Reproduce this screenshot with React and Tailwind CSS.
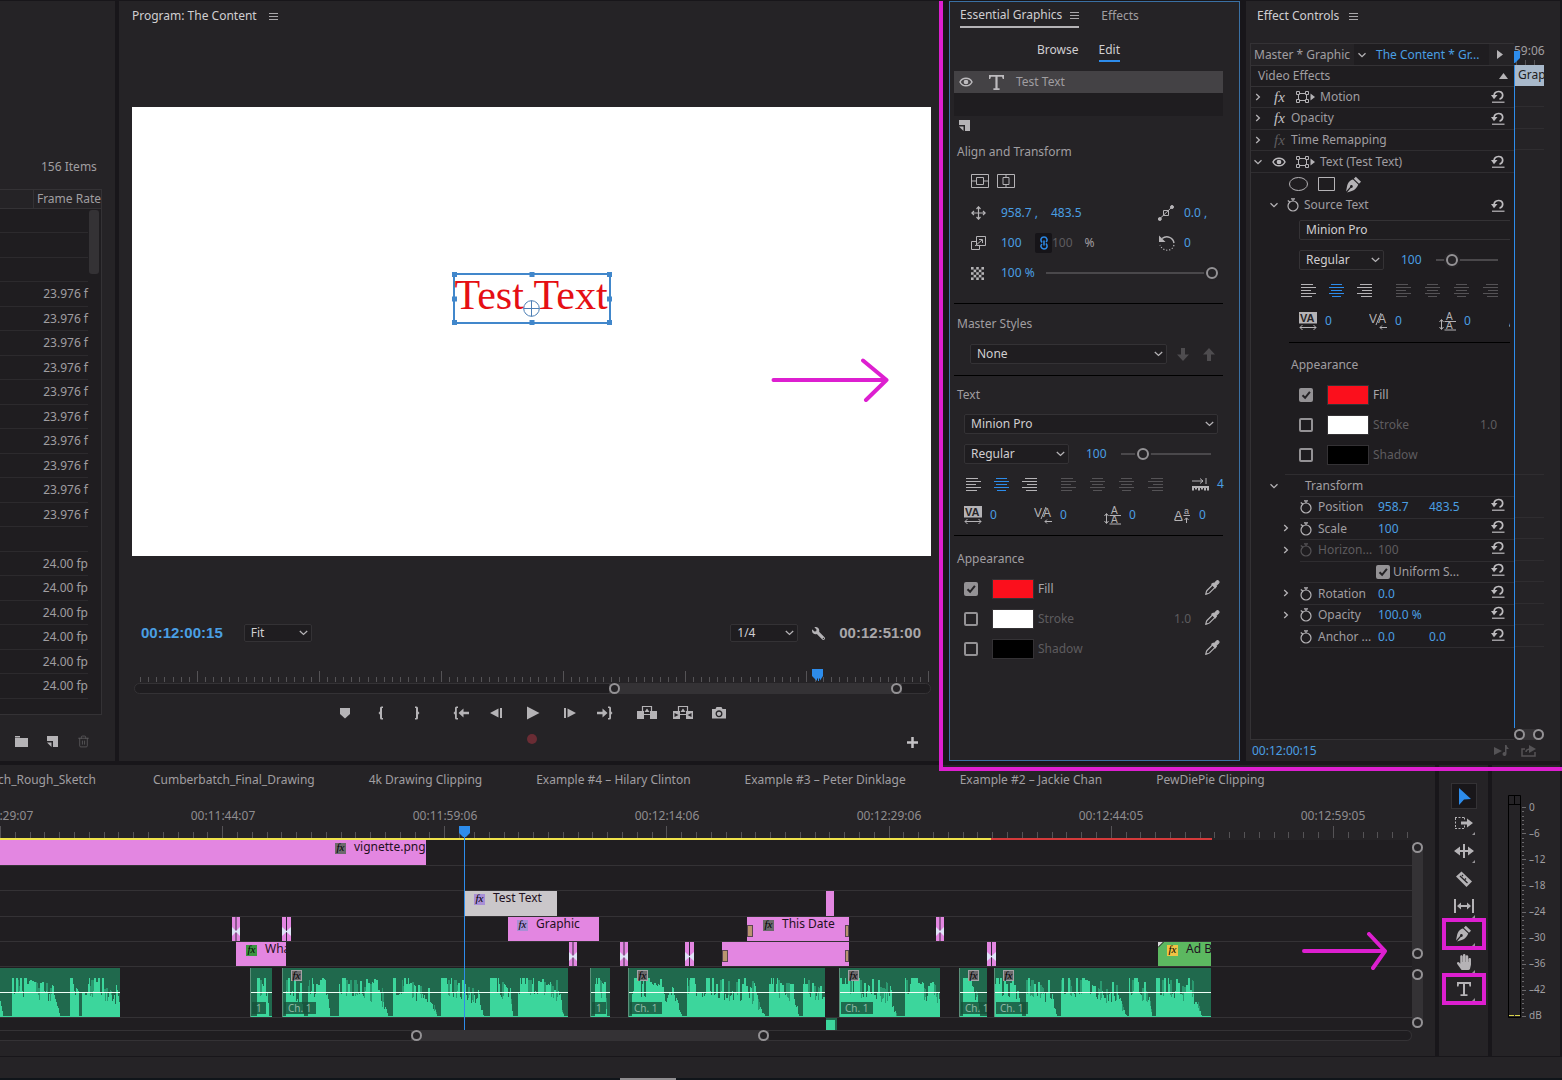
import React from 'react'
import { Trash2 } from 'lucide-react'
import { FaWrench, FaHandPaper } from 'react-icons/fa'

const frameRates = [
  '', '', '',
  ...Array(10).fill('23.976 f'),
  '',
  ...Array(6).fill('24.00 fp'),
]

const sequences = [
  'Cumberbatch_Final_Drawing',
  '4k Drawing Clipping',
  'Example #4 – Hilary Clinton',
  'Example #3 – Peter Dinklage',
  'Example #2 – Jackie Chan',
  'PewDiePie Clipping',
]

const timecodes = ['00:11:29:07', '00:11:44:07', '00:11:59:06', '00:12:14:06', '00:12:29:06', '00:12:44:05', '00:12:59:05']

const videoTracks = [
  { h: 26, clips: [{ x: 0, w: 426, label: 'vignette.png', pad: 335, fx: 'gray' }] },
  { h: 25, clips: [] },
  { h: 26, clips: [{ x: 465, w: 92, label: 'Test Text', pad: 9, fx: 'violet', tone: 'selected' }, { x: 826, w: 8 }] },
  {
    h: 25,
    clips: [
      { x: 232, w: 8, cross: true },
      { x: 282, w: 9, cross: true },
      { x: 508, w: 91, label: 'Graphic', pad: 9, fx: 'violet' },
      { x: 747, w: 102, label: 'This Date', pad: 16, fx: 'gray', handles: true },
      { x: 936, w: 8, cross: true },
    ],
  },
  {
    h: 25,
    clips: [
      { x: 236, w: 50, label: 'Wha', pad: 10, fx: 'green' },
      { x: 569, w: 8, cross: true },
      { x: 620, w: 8, cross: true },
      { x: 685, w: 9, cross: true },
      { x: 722, w: 127, handles: true },
      { x: 987, w: 9, cross: true },
      { x: 1158, w: 53, label: 'Ad B', pad: 9, fx: 'yellow', tone: 'green' },
    ],
  },
]

// phrases are [start, end] pairs, measured from the left edge of the clip
const audioClips = [
  { x: 0, w: 120, phrases: [[-20, 3], [12, 60], [70, 79], [82, 122]] },
  { x: 250, w: 22, label: '1', phrases: [[7, 19]] },
  { x: 282, w: 286, label: 'Ch. 1', fx: true, phrases: [[4, 22], [26, 48], [57, 106], [111, 155], [159, 202], [208, 231], [236, 282]] },
  { x: 590, w: 20, label: '1', phrases: [[5, 17]] },
  { x: 628, w: 197, label: 'Ch. 1', fx: true, phrases: [[4, 54], [59, 137], [141, 171], [175, 200]] },
  { x: 839, w: 101, label: 'Ch. 1', fx: true, phrases: [[1, 58], [66, 103]] },
  { x: 959, w: 28, label: 'Ch. 1', fx: true, phrases: [[4, 21]] },
  { x: 994, w: 217, label: 'Ch. 1', fx: true, phrases: [[1, 28], [32, 63], [67, 133], [135, 158], [162, 208]] },
]

const noise = (n) => {
  let v = Math.imul(n ^ 0x9e3779b9, 0x85ebca6b)
  v = Math.imul(v ^ (v >>> 13), 0xc2b2ae35)
  return ((v ^ (v >>> 16)) >>> 0) / 4294967296
}

function wavePaths(clip) {
  let body = ''
  let spikes = ''
  for (let i = 0; i < clip.w; i++) {
    let low = 1
    let high = 1
    clip.phrases.forEach(([s, e]) => {
      if (i < s || i >= e) return
      const t = (i - s) / (e - s)
      const n = clip.x + i
      const top = t < 0.35 ? 39 - (noise(n) > 0.8 ? 6 : 0) : 39 - noise(n >> 1) * 16 * t
      const base = 26 - noise(n + 900) * 12 * (0.3 + t)
      const fade = t > 0.85 ? (1 - t) / 0.15 : 1
      const loud = noise((n >> 1) + 300) > 0.35 + t * 0.35
      low = Math.max(1, (loud ? top : base) * fade)
      high = Math.max(low, (noise((n >> 1) + 500) > 0.6 ? top - 2 : base) * fade)
    })
    body += `M${i} 49v${-Math.round(low)}h1v${Math.round(low)}z`
    spikes += `M${i} 49v${-Math.round(high)}h1v${Math.round(high)}z`
  }
  return { body, spikes }
}

/* ---------- small shared pieces ---------- */

const Menu = () => (
  <button aria-label="Panel menu" className="text-[#a9a7aa]">
    <svg width="9" height="9" viewBox="0 0 9 9" stroke="currentColor"><path d="M0 1.500h9M0 4.500h9M0 7.500h9" /></svg>
  </button>
)

const Chevron = ({ open, className = '' }) => (
  <svg width="8" height="8" viewBox="0 0 8 8" fill="none" stroke="#b5b3b6" strokeWidth="1.3" className={className}>
    {open ? <path d="M.5 2.200 4 5.600 7.500 2.200" /> : <path d="M2.200 1 5.400 4 2.200 7" />}
  </svg>
)

const Hot = ({ children }) => <button className="text-left text-[#4a9fe3] whitespace-pre">{children}</button>

function Select({ label, value, className }) {
  return (
    <div className={`relative shrink-0 ${className}`}>
      <select aria-label={label} className="block w-full h-full appearance-none rounded-[2px] border border-[#343235] bg-[#1f1d20] px-1.5 leading-4 text-[#d0ced1]">
        <option>{value}</option>
      </select>
      <svg width="9" height="6" viewBox="0 0 9 6" fill="none" stroke="#b5b3b6" strokeWidth="1.3" className="pointer-events-none absolute right-1 top-1/2 -translate-y-1/2"><path d="M.8 1 4.500 4.400 8.200 1" /></svg>
    </div>
  )
}

const Slider = ({ label, value, className }) => (
  <input
    type="range"
    aria-label={label}
    defaultValue={value}
    className={`h-3 shrink-0 appearance-none bg-transparent [&::-webkit-slider-runnable-track]:h-0.5 [&::-webkit-slider-runnable-track]:bg-[#4a484b] [&::-webkit-slider-thumb]:-mt-[5px] [&::-webkit-slider-thumb]:size-3 [&::-webkit-slider-thumb]:appearance-none [&::-webkit-slider-thumb]:rounded-full [&::-webkit-slider-thumb]:border-2 [&::-webkit-slider-thumb]:border-[#949295] [&::-webkit-slider-thumb]:bg-[#252326] [&::-webkit-slider-thumb]:shadow-[0_0_0_2px_#252326] ${className}`}
  />
)

const Check = ({ id, on }) => (
  <span className="relative size-[14px] shrink-0">
    <input id={id} type="checkbox" defaultChecked={on} className="peer block size-[14px] appearance-none rounded-[2px] border-2 border-[#949295] checked:bg-[#949295]" />
    <svg viewBox="0 0 14 14" fill="none" stroke="#252326" strokeWidth="2" className="pointer-events-none absolute inset-0 hidden peer-checked:block"><path d="m3.500 7.200 2.600 2.600 4.800-6" /></svg>
  </span>
)

const Knob = () => <span className="block size-[11px] rounded-full border-2 border-[#949295] bg-[#252326]" />

const NewItem = () => (
  <svg width="11" height="11" viewBox="0 0 11 11" fill="#b5b3b6"><path d="M0 0h11v11H6V5H0z" /><path d="M0 6.500h4.500V11z" /></svg>
)

const Eye = () => (
  <svg width="14" height="10" viewBox="0 0 14 10" fill="none" stroke="#bdbbbe" strokeWidth="1.500"><path d="M1 5c2.500-5 9.500-5 12 0-2.500 5-9.500 5-12 0z" /><circle cx="7" cy="5" r="1.600" fill="#bdbbbe" /></svg>
)

const Reset = () => (
  <button aria-label="Reset parameter">
    <svg width="14" height="13" viewBox="0 0 14 13" fill="none" stroke="#bdbbbe" strokeWidth="1.700"><path d="M3 5.500C3.500.5 11.500 0 11.700 5c0 2-1.200 3.700-3.200 4.200" /><path d="M0 5h6.500L3 9.200z" fill="#bdbbbe" stroke="none" /><path d="M1 12.200h12.500" strokeWidth="1.200" /></svg>
  </button>
)

const Stopwatch = ({ dim }) => (
  <button aria-label="Toggle animation" className="block">
    <svg width="12" height="14" viewBox="0 0 12 14" fill="none" stroke={dim ? '#555356' : '#b5b3b6'} strokeWidth="1.200"><circle cx="6" cy="8" r="5" /><path d="M4 .8h4M6 1v2M.8 2.500l2 1.500" /></svg>
  </button>
)

const TransformBox = () => (
  <svg width="20" height="12" viewBox="0 0 20 12" fill="none" stroke="#b5b3b6"><path d="M3 2.500h6M3 9.500h6M2.500 3v6M10.500 3v6" /><path d="M.5.500h3v3h-3zM9.500.5h3v3h-3zM.5 8.500h3v3h-3zM9.500 8.500h3v3h-3z" fill="#1f1d20" /><path d="m14.500 2.500 4.500 3.500-4.500 3.500z" fill="#b5b3b6" stroke="none" /></svg>
)

const Pen = ({ size = 17 }) => (
  <svg width={size} height={size} viewBox="0 0 17 17" fill="#b5b3b6"><path d="m10.800.8 5.200 5-2 2-5.200-5z" /><path d="m8 3.600 5.200 5c-.8 2.800-3.400 5.800-7.200 6.600L2 16.400l4-4.600a1.400 1.400 0 1 0-.9-.8L1 15.400 2 10.500C2.600 7 5.200 4.200 8 3.600z" /></svg>
)

const Dropper = () => (
  <svg width="15" height="15" viewBox="0 0 15 15" fill="none" stroke="#b5b3b6" strokeWidth="1.200"><path d="M8 4.500 2 10.500c-.8.900-.7 2-1.200 3.600 1.600-.4 2.800-.4 3.700-1.200l6-6" /><path d="m6.800 4.200 1.500-1 .9.500 2.300-2.600c1.400-1.200 3.300.6 2 2l-2.500 2.400.4.800-1.200 1.600z" fill="#b5b3b6" /></svg>
)

const alignShapes = {
  left: 'M0 .5h12M0 3.500h15M0 6.500h10M0 9.500h15M0 12.500h11',
  center: 'M2 .5h11M0 3.500h15M2 6.500h11M0 9.500h15M3 12.500h9',
  right: 'M3 .5h12M0 3.500h15M5 6.500h10M0 9.500h15M4 12.500h11',
}

const Align = ({ shape, color, label }) => (
  <button aria-label={label}>
    <svg width="15" height="13" viewBox="0 0 15 13" stroke={color}><path d={alignShapes[shape]} /></svg>
  </button>
)

const Letters = (props) => <text fill="#b5b3b6" fontFamily="Liberation Sans" fontSize="11" {...props} />

const spacingIcons = [
  <svg width="18" height="18" viewBox="0 0 18 18"><path d="M0 0h18v11.500H0z" fill="#b5b3b6" /><Letters x="1" y="10" fontWeight="bold" fill="#252326">VA</Letters><path d="M1 15.500h16M3.500 13 1 15.500 3.500 18M14.500 13l2.500 2.500-2.500 2.500" stroke="#b5b3b6" fill="none" /></svg>,
  <svg width="18" height="18" viewBox="0 0 18 18"><Letters x="0" y="11" fontSize="12">V</Letters><Letters x="9" y="11" fontSize="12">A</Letters><path d="M7 13 12 1M18 15.500h-7M13 13.500l-2 2 2 2" stroke="#b5b3b6" fill="none" /></svg>,
  <svg width="17" height="19" viewBox="0 0 17 19"><Letters x="7" y="8" fontSize="10">A</Letters><Letters x="7" y="17" fontSize="10">A</Letters><path d="M5.500 9.500H17M5.500 18H17M2.500 8v9M.5 10l2-2.500 2 2.500M.5 15l2 2.500 2-2.500" stroke="#b5b3b6" fill="none" /></svg>,
  <svg width="17" height="16" viewBox="0 0 17 16"><Letters x="0" y="13" fontSize="13">A</Letters><Letters x="10" y="7" fontSize="9">a</Letters><path d="M.5 13.500h8M9.500 8.500H16M12.500 16v-5M10.500 13l2-2.200 2 2.200" stroke="#b5b3b6" fill="none" /></svg>,
]

/* text settings, used by both right-hand panels */
function TextControls({ id, fontClass, weightClass, sliderClass }) {
  return (
    <>
      <Select label="Font" value="Minion Pro" className={`h-5 ${fontClass}`} />
      <div className="mt-2.5 flex items-center">
        <Select label="Font style" value="Regular" className={`h-5 ${weightClass}`} />
        <span className="w-[17px] shrink-0" />
        <span className="w-[35px] shrink-0"><Hot>100</Hot></span>
        <Slider label="Font size" value={20} className={sliderClass} />
      </div>
      <div className="mt-2.5 flex h-5 items-center pl-0.5">
        <div className="flex shrink-0 gap-[13px]">
          <Align shape="left" color="#b5b3b6" label="Left align text" />
          <Align shape="center" color="#2d8ceb" label="Center align text" />
          <Align shape="right" color="#b5b3b6" label="Right align text" />
        </div>
        <div className="ml-6 flex shrink-0 gap-3.5">
          <Align shape="left" color="#555356" label="Justify last left" />
          <Align shape="center" color="#555356" label="Justify last center" />
          <Align shape="center" color="#555356" label="Justify" />
          <Align shape="right" color="#555356" label="Justify last right" />
        </div>
        {id === 'eg' && (
          <>
            <svg width="17" height="13" viewBox="0 0 17 13" fill="none" stroke="#b5b3b6" className="ml-[29px] shrink-0"><path d="M0 3h11M8 .5 11 3 8 5.500M14 0v6" /><path d="M0 9h17M1 8v4.500M4 8v3.500M7 8v4.500M10 8v3.500M13 8v4.500M16 8v4.500" strokeWidth="2" /></svg>
            <span className="ml-2"><Hot>4</Hot></span>
          </>
        )}
      </div>
      <div className="mt-[11px] flex h-5 items-center overflow-hidden">
        {spacingIcons.map((icon, i) => (
          <div key={i} className="flex w-[70px] shrink-0 items-center gap-2 last:w-auto">
            {icon}
            {(id === 'eg' || i < 3) && <Hot>0</Hot>}
          </div>
        ))}
      </div>
    </>
  )
}

function Appearance({ id, droppers }) {
  const rows = [
    { name: 'Fill', color: 'bg-[#fb0f1c]', on: true },
    { name: 'Stroke', color: 'bg-white', width: '1.0' },
    { name: 'Shadow', color: 'bg-black' },
  ]
  return rows.map((r) => (
    <div key={r.name} className="flex h-[30px] items-center">
      <Check id={`${id}-${r.name}`} on={r.on} />
      <button aria-label={`${r.name} color`} className={`ml-3.5 mr-1 h-5 w-[42px] shrink-0 border border-[#343235] ${r.color}`} />
      <label htmlFor={`${id}-${r.name}`} className={r.on ? 'text-[#a9a7aa]' : 'text-[#5e5c5f]'}>{r.name}</label>
      <span className="ml-auto text-[#5e5c5f]">{r.width}</span>
      {droppers && <button aria-label={`Pick ${r.name} color`} className="ml-3.5 pb-1"><Dropper /></button>}
    </div>
  ))
}

/* ---------- panels ---------- */

function ProjectPanel() {
  return (
    <section className="flex w-[115px] shrink-0 flex-col overflow-hidden bg-[#252326] pt-[156px]">
      <div className="h-8 pl-[41px] leading-5">156 Items</div>
      <div className="relative h-[526px] w-[102px] border-r border-[#343235] border-b bg-[#1f1d20]">
        <div className="flex h-5 border-y border-[#343235] bg-[#252326] leading-[18px]">
          <span className="w-9 border-r border-[#343235]" />
          <span className="whitespace-nowrap pl-[3px]">Frame Rate</span>
        </div>
        <table className="h-[490px] w-[88px] table-fixed border-collapse">
          <tbody>
            {frameRates.map((rate, i) => (
              <tr key={i} className="border-b border-[#2c2a2d]">
                <td className="whitespace-nowrap p-0 text-right leading-5">{rate || '\u00a0'}</td>
              </tr>
            ))}
          </tbody>
        </table>
        <div className="absolute right-0.5 top-[21px] h-16 w-2.5 rounded-[3px] bg-[#343235]" />
      </div>
      <div className="flex h-[46px] items-center gap-[19px] pl-[15px] pt-1.5">
        <button aria-label="New bin"><svg width="13" height="11" viewBox="0 0 13 11" fill="#b5b3b6"><path d="M0 0h5v1.500H0zM0 2h13v9H0z" /></svg></button>
        <button aria-label="New item"><NewItem /></button>
        <button aria-label="Clear"><Trash2 size={13} strokeWidth={1.5} color="#5e5c5f" /></button>
      </div>
    </section>
  )
}

const transport = [
  ['Add marker', <path d="M-5-5H5V1L0 5.500-5 1z" />],
  ['Mark in', <path d="M2-6.500H.5Q-1-6.500-1-5v3.200L-2.500 0-1 1.800V5Q-1 6.500.5 6.500H2V5H1V-5h1z" />],
  ['Mark out', <path d="M-2-6.500H-.5Q1-6.500 1-5v3.200L2.500 0 1 1.800V5Q1 6.500-.5 6.500H-2V5h1V-5h-1z" />, 'mr-2'],
  ['Go to in', <><path d="M-3-6.500h-1.500Q-6-6.500-6-5v3.200L-7.500 0-6 1.800V5q0 1.500 1.500 1.500H-3V5h-1.200V-5H-3z" /><path d="M-2.500 0 2.500-4.500V-1.200H8V1.200H2.500V4.500z" /></>],
  ['Step back', <path d="M-7 0 1.500-4.500v9zM3-5h2V5H3z" />],
  ['Play', <path d="M-6-6.500 6.500 0-6 6.500z" />],
  ['Step forward', <path d="M7 0-1.500-4.500v9zM-3-5h-2V5h2z" />],
  ['Go to out', <><path d="M3-6.500h1.500Q6-6.500 6-5v3.200L7.500 0 6 1.800V5Q6 6.500 4.500 6.500H3V5h1.200V-5H3z" /><path d="M2.500 0-2.500-4.500V-1.200H-8V1.200h5.500V4.500z" /></>, 'mr-1.5'],
  ['Lift', <><path d="M-10-2h7v8h-7zM3-2h7v8H3z" /><path d="M-4.500-6.500h9v8h-9z" fill="none" stroke="currentColor" strokeWidth="1.200" /><path d="M0-4.500 2.500-1h-5z" /></>],
  ['Extract', <><path d="M-10-2h7v8h-7zM3-2h7v8H3z" /><path d="M-4.500-6.500h9v8h-9z" fill="none" stroke="currentColor" strokeWidth="1.200" /><path d="M0-4.500 2.500-1h-5z" /><path d="m-8.500 0 4 2-4 2zM8.500 0l-4 2 4 2z" fill="#252326" /></>],
  ['Export frame', <><path d="M-7-4h3.500l1-2h5l1 2H7V5.500H-7z" /><circle cy=".8" r="2.800" fill="none" stroke="#252326" strokeWidth="1.300" /></>],
]

function ProgramPanel() {
  const ticks = Array.from({ length: 98 }, (_, i) => ({ x: 8 + Math.round(i * 8.127), major: i % 15 === 7 }))
  const handles = ['-left-[3px] -top-[3px]', 'left-1/2 -translate-x-1/2 -top-[3px]', '-right-[3px] -top-[3px]', '-left-[3px] top-1/2 -translate-y-1/2', '-right-[3px] top-1/2 -translate-y-1/2', '-left-[3px] -bottom-[3px]', 'left-1/2 -translate-x-1/2 -bottom-[3px]', '-right-[3px] -bottom-[3px]']
  return (
    <section className="min-w-0 flex-1 bg-[#252326] pl-[13px] pr-2">
      <header className="flex h-[30px] items-center gap-3 text-[#d0ced1]">
        <h2>Program: The Content</h2>
        <Menu />
      </header>
      <div className="relative mt-[76px] flex aspect-video w-full justify-center bg-white pt-[166px]">
        <div className="relative h-[51px] w-[158px] whitespace-nowrap border-2 border-[#4187cb] font-['Liberation_Serif'] text-[42px] leading-10 text-[#e50f14]">
          Test Text
          {handles.map((h) => <span key={h} className={`absolute size-[5px] bg-[#4187cb] ${h}`} />)}
          <svg width="17" height="17" viewBox="0 0 17 17" fill="none" stroke="#4d7fb5" className="absolute left-[68px] top-[25px]"><circle cx="8.500" cy="8.500" r="7.800" /><path d="M.5 8.500h16M8.500.5v16" /></svg>
        </div>
        <svg width="118" height="44" viewBox="0 0 118 44" fill="none" stroke="#dd1fd0" strokeWidth="4" strokeLinecap="round" strokeLinejoin="round" className="absolute bottom-[154px] right-[42px]"><path d="M2.500 22h113M92 2.500l23.500 19.500L95 42" /></svg>
      </div>
      <div className="mt-[67px] flex h-5 items-center pl-[9px] pr-2.5">
        <button className="font-['Liberation_Sans'] text-[15px] font-bold text-[#4a9fe3]">00:12:00:15</button>
        <Select label="Zoom level" value="Fit" className="ml-[21px] h-[18px] w-[68px]" />
        <Select label="Playback resolution" value="1/4" className="ml-auto h-[18px] w-[68px]" />
        <button aria-label="Settings" className="ml-3.5 mr-3.5"><FaWrench size={13} color="#b5b3b6" className="-scale-x-100" /></button>
        <span className="font-['Liberation_Sans'] text-[15px] font-bold text-[#a9a7aa]">00:12:51:00</span>
      </div>
      <div className="relative mt-[26px] h-[14px]">
        <svg width="100%" height="14" stroke="#555356">
          {ticks.map((t) => <path key={t.x} d={`M${t.x + 0.5} ${t.major ? 2 : 8}V13`} />)}
        </svg>
        <svg width="11" height="12" viewBox="0 0 11 12" fill="#2d8ceb" className="absolute left-[680px] top-0"><path d="M0 0h11v7l-3 4.500V9.500H7V12H6V9.500H5V12L0 7z" /></svg>
      </div>
      <div className="relative ml-0.5 h-[11px] rounded-full border border-[#343235] bg-[#1f1d20]">
        <div className="absolute -top-px left-[474px] flex w-[293px] justify-between bg-[#343235]"><Knob /><Knob /></div>
      </div>
      <div className="mt-[9px] flex h-5 justify-center text-[#b5b3b6]">
        {transport.map(([name, art, gap = '']) => (
          <button key={name} aria-label={name} className={`grid w-9 place-items-center ${gap}`}>
            <svg width="22" height="16" viewBox="-11 -8 22 16" fill="currentColor">{art}</svg>
          </button>
        ))}
      </div>
      <div className="mt-[11px] grid grid-cols-[1fr_auto_1fr] items-start">
        <button aria-label="Record" className="col-start-2 size-2.5 rounded-full bg-[#6a2c34]" />
        <button aria-label="Button editor" className="mr-[13px] mt-[3px] justify-self-end">
          <svg width="11" height="11" viewBox="0 0 11 11" stroke="#c4c2c5" strokeWidth="2.500"><path d="M0 5.500h11M5.500 0v11" /></svg>
        </button>
      </div>
    </section>
  )
}

function EssentialGraphics() {
  return (
    <section className="w-[291px] shrink-0 border border-[#3a70a3] bg-[#252326] pl-1">
      <header className="flex gap-[22px] pl-1.5">
        <h2 className="flex h-[26px] items-center gap-2 border-b-2 border-[#b5b3b6] pt-0.5 text-[#d0ced1]">Essential Graphics <Menu /></h2>
        <button className="pt-0.5">Effects</button>
      </header>
      <nav className="mt-2.5 flex justify-center gap-5 pr-9 text-[#d0ced1]">
        <button className="h-6 border-b-2 border-transparent pt-0.5">Browse</button>
        <button className="h-6 border-b-2 border-[#2d8ceb] pt-0.5">Edit</button>
      </nav>
      <div className="mr-4 mt-[9px] h-[45px] bg-[#1f1d20]">
        <div className="flex h-[22px] items-center bg-[#444245] pl-[5px]">
          <button aria-label="Toggle visibility"><Eye /></button>
          <svg width="15" height="15" viewBox="0 0 15 15" fill="#bdbbbe" className="ml-4 mr-3"><path d="M0 0h15v4h-1.200L13 1.700H8.600v11.600h2V15H4.400v-1.700h2V1.700H2L1.200 4H0z" /></svg>
          <span>Test Text</span>
        </div>
      </div>
      <button aria-label="New layer" className="ml-[5px] mt-1 block"><NewItem /></button>
      <h3 className="ml-[3px] mt-[11px] leading-5">Align and Transform</h3>
      <div className="ml-[17px] mt-3 flex gap-2">
        <button aria-label="Vertical center"><svg width="18" height="14" viewBox="0 0 18 14" fill="none" stroke="#b5b3b6"><path d="M.5.500h17v13H.5zM5.500 3.500h7v7h-7zM1 7h4.500M12.500 7H17" /></svg></button>
        <button aria-label="Horizontal center"><svg width="18" height="14" viewBox="0 0 18 14" fill="none" stroke="#b5b3b6"><path d="M.5.500h17v13H.5zM6 3.500h6v7H6zM9 1v2.500M9 10.500V13" /></svg></button>
      </div>
      <div className="ml-[17px] mr-4 mt-2.5 grid h-[90px] auto-rows-fr grid-cols-[30px_50px_107px_26px_1fr] items-center">
        <svg width="15" height="14" viewBox="0 0 15 14" fill="none" stroke="#b5b3b6" strokeWidth="1.200"><path d="M7.500 1v12M1 7h13M5.500 3l2-2.200 2 2.200M5.500 11l2 2.200 2-2.200M3 5 .8 7 3 9M12 5l2.200 2L12 9" /></svg>
        <Hot>958.7 ,</Hot>
        <Hot>483.5</Hot>
        <svg width="16" height="16" viewBox="0 0 16 16" fill="none" stroke="#b5b3b6"><path d="M5.500 5.500h5v5h-5zM1.500 14 14 2" /><circle cx="1.800" cy="14" r="1.500" fill="#b5b3b6" /><circle cx="14" cy="2" r="1.500" fill="#b5b3b6" /></svg>
        <Hot>0.0 ,</Hot>

        <svg width="15" height="14" viewBox="0 0 15 14" fill="none" stroke="#b5b3b6"><path d="M5.500.5h9v9h-9zM5 5.500H.5v8h8V10M4 10l7-6M8 3.500h3.500V7" /></svg>
        <Hot>100</Hot>
        <span className="-ml-4 flex items-center">
          <button aria-label="Set scale lock" className="grid h-5 w-[17px] place-items-center rounded-[2px] bg-[#161418]"><svg width="8" height="14" viewBox="0 0 8 14" fill="none" stroke="#2d8ceb" strokeWidth="1.500"><path d="M2 6.500C0 4 1 1 4 1s4 3.500 2 5M6 7.500C8 10 7 13 4 13S0 9.500 2 8M4 4.500v5" /></svg></button>
          <span className="text-[#5e5c5f]">100</span>
          <span className="ml-3">%</span>
        </span>
        <svg width="17" height="17" viewBox="0 0 17 17" fill="none" stroke="#b5b3b6" strokeWidth="1.500"><path d="M4 3.500C9 0 15 2.500 16 8" /><path d="M16 10c-2 7-11 7-14 0" strokeDasharray="1.200 1.800" strokeWidth="1.200" /><path d="M1 .5v6.500h6.500z" fill="#b5b3b6" stroke="none" /></svg>
        <Hot>0</Hot>

        <svg width="13" height="13" viewBox="0 0 13 13" fill="#b5b3b6">
          {[0, 1, 2, 3, 4].map((r) => [0, 1, 2, 3, 4].map((c) => (r + c) % 2 === 0 && <path key={`${r}${c}`} d={`M${c * 2.6} ${r * 2.6}h2.600v2.600h-2.600z`} />))}
        </svg>
        <Hot>100 %</Hot>
        <div className="col-span-3 -ml-[5px]"><Slider label="Opacity" value={100} className="block w-[172px]" /></div>
      </div>
      <hr className="mr-4 mt-[15px] border-black" />
      <h3 className="ml-[3px] mt-2.5 leading-5">Master Styles</h3>
      <div className="ml-4 mt-2.5 flex items-center">
        <Select label="Master style" value="None" className="h-5 w-[197px]" />
        <button aria-label="Push to track" className="ml-2.5"><svg width="12" height="13" viewBox="0 0 12 13" fill="#4e4c4f"><path d="M4 0h4v6.500h4L6 13 0 6.500h4z" /></svg></button>
        <button aria-label="Sync from track" className="ml-3.5"><svg width="12" height="13" viewBox="0 0 12 13" fill="#4e4c4f"><path d="M4 13h4V6.500h4L6 0 0 6.500h4z" /></svg></button>
      </div>
      <hr className="mr-4 mt-[11px] border-black" />
      <h3 className="ml-[3px] mt-[9px] leading-5">Text</h3>
      <div className="ml-2.5 mr-4 mt-[9px]">
        <TextControls id="eg" fontClass="w-[254px]" weightClass="w-[105px]" sliderClass="w-[90px]" />
      </div>
      <hr className="mr-4 mt-2.5 border-black" />
      <h3 className="ml-[3px] mt-[13px] leading-5">Appearance</h3>
      <div className="ml-2.5 mr-[19px] mt-[5px]">
        <Appearance id="eg" droppers />
      </div>
    </section>
  )
}

const fxRows = [
  { name: 'Motion', box: true },
  { name: 'Opacity' },
  { name: 'Time Remapping', dim: true },
  { name: 'Text (Test Text)', box: true, eye: true },
]

const transformRows = [
  { name: 'Position', values: ['958.7', '483.5'] },
  { name: 'Scale', values: ['100'], arrow: true },
  { name: 'Horizon...', values: ['100'], arrow: true, dim: true },
  { uniform: true },
  { name: 'Rotation', values: ['0.0'], arrow: true },
  { name: 'Opacity', values: ['100.0 %'], arrow: true },
  { name: 'Anchor ...', values: ['0.0', '0.0'] },
]

function EffectControls() {
  return (
    <section className="flex min-w-0 flex-1 flex-col bg-[#252326] pl-1">
      <header className="flex h-[30px] shrink-0 items-center gap-2.5 pl-[7px] text-[#d0ced1]">
        <h2>Effect Controls</h2>
        <Menu />
      </header>
      <div className="mt-3 flex flex-1">
        <div className="w-[264px] shrink-0 border border-r-0 border-[#343235] bg-[#1f1d20]">
          <div className="flex h-[21px] items-center bg-[#252326]">
            <span className="w-[103px] pl-[3px]">Master * Graphic</span>
            <button className="flex h-[21px] w-[135px] items-center gap-2.5 bg-[#1f1d20] pl-1 text-[#4a9fe3]"><Chevron open />The Content * Gr...</button>
            <button aria-label="Show timeline view" className="ml-2"><svg width="6" height="9" viewBox="0 0 6 9" fill="#b5b3b6"><path d="m0 0 6 4.500L0 9z" /></svg></button>
          </div>
          <div className="grid h-[108px] auto-rows-fr">
            <div className="flex items-center justify-between border-y border-[#343235] pl-[7px] pr-1.5">
              Video Effects
              <svg width="9" height="6" viewBox="0 0 9 6" fill="#b5b3b6"><path d="M0 6 4.500 0 9 6z" /></svg>
            </div>
            {fxRows.map((r) => (
              <div key={r.name} className="flex items-center border-b border-[#2f2d30] pl-[3px] pr-[9px]">
                <Chevron open={r.eye} />
                <span className={`w-[17px] font-['Liberation_Serif'] text-[15px] italic ${r.eye ? 'ml-2.5 mr-0.5' : 'ml-3'} ${r.dim ? 'text-[#5e5c5f]' : 'text-[#c4c2c5]'}`}>{r.eye ? <Eye /> : 'fx'}</span>
                {r.box && <span className="ml-[5px] mr-1"><TransformBox /></span>}
                <span className="mr-auto">{r.name}</span>
                {!r.dim && <Reset />}
              </div>
            ))}
          </div>
          <div className="flex h-[22px] items-center gap-2.5 pl-[38px]">
            <button aria-label="Ellipse mask"><svg width="19" height="14" viewBox="0 0 19 14" fill="none" stroke="#b5b3b6"><ellipse cx="9.500" cy="7" rx="9" ry="6.500" /></svg></button>
            <button aria-label="Rectangle mask"><svg width="17" height="14" viewBox="0 0 17 14" fill="none" stroke="#b5b3b6"><path d="M.5.500h16v13H.5z" /></svg></button>
            <button aria-label="Free draw mask"><Pen /></button>
          </div>
          <div className="flex h-5 items-center pl-[19px] pr-[9px]">
            <Chevron open />
            <span className="ml-[9px] mr-[5px]"><Stopwatch /></span>
            <span className="mr-auto">Source Text</span>
            <Reset />
          </div>
          <div className="ml-12 mr-1 mt-[5px] overflow-hidden">
            <TextControls id="ec" fontClass="w-[254px]" weightClass="w-[85px]" sliderClass="w-[62px]" />
          </div>
          <hr className="ml-[38px] mr-1 mt-[11px] border-black" />
          <h3 className="ml-10 mt-3 leading-5">Appearance</h3>
          <div className="ml-12 mr-[17px] mt-[5px]">
            <Appearance id="ec" />
          </div>
          <div className="ml-[34px] mt-1 border-t border-[#2f2d30]" />
          <div className="flex h-[21px] items-center pl-[19px]"><Chevron open /><span className="ml-[27px]">Transform</span></div>
          <div className="grid h-[151px] auto-rows-fr">
            {transformRows.map((r, i) => (
              <div key={i} className="flex items-center pl-[31px]">
                <span className="w-[18px]">{r.arrow && <Chevron />}</span>
                <div className="flex h-full flex-1 items-center border-t border-[#2f2d30] pr-[9px]">
                  {r.uniform ? (
                    <label htmlFor="uniform" className="ml-[76px] flex items-center gap-[3px]"><Check id="uniform" on />Uniform S...</label>
                  ) : (
                    <>
                      <Stopwatch dim={r.dim} />
                      <span className={`ml-1.5 w-[60px] whitespace-nowrap ${r.dim ? 'text-[#5e5c5f]' : ''}`}>{r.name}</span>
                      {r.values.map((v, k) => (
                        <span key={k} className="w-[51px] whitespace-nowrap">{r.dim ? <span className="text-[#5e5c5f]">{v}</span> : <Hot>{v}</Hot>}</span>
                      ))}
                    </>
                  )}
                  <span className="ml-auto"><Reset /></span>
                </div>
              </div>
            ))}
          </div>
          <div className="ml-[49px] border-t border-[#2f2d30]" />
        </div>
        <div className="relative w-[30px]">
          <div className="h-[22px]">
            <span className="block text-right leading-[15px]">59:06</span>
            <svg width="28" height="7" stroke="#555356"><path d="M2.500 2v5M11.500 2v5M20.500 2v5" /></svg>
          </div>
          <svg width="7" height="12" viewBox="0 0 7 12" fill="#2d8ceb" className="absolute left-0 top-2"><path d="M0 0h6v7l-5 5H0z" /></svg>
          <div className="flex h-[663px] flex-col border-l border-[#2d8ceb]">
            <div className="h-[21px] shrink-0 overflow-hidden bg-[#a9b9cb] pl-[3px] leading-5 text-[#1f1d20]">Grap</div>
            {[21, 22, 21].map((h, i) => <div key={i} style={{ height: h }} className="border-b border-[#2f2d30]" />)}
            <div className="h-[325px] border-b border-[#2f2d30]" />
            <div className="mt-[21px] grid h-[151px] auto-rows-fr">
              {transformRows.map((r, i) => <div key={i} className="border-b border-[#2f2d30]" />)}
            </div>
          </div>
          <div className="mt-px flex justify-between rounded-full bg-[#343235]"><Knob /><Knob /></div>
        </div>
      </div>
      <footer className="flex h-[21px] items-center gap-3 pl-0.5 pr-[23px]">
        <span className="mr-auto"><Hot>00:12:00:15</Hot></span>
        <svg width="15" height="12" viewBox="0 0 15 12" fill="#555356"><path d="m0 2 8 4-8 4z" /><path d="M11 0h1.500q.5 2.500 2.500 4h-2.500v5a2 2 0 1 1-1.500-2z" /></svg>
        <svg width="16" height="12" viewBox="0 0 16 12" fill="none" stroke="#555356" strokeWidth="1.500"><path d="M4 4H1v7h13V7M5 7q0-3 5-3" /><path d="m8 0 7 4-7 4z" fill="#555356" stroke="none" /></svg>
      </footer>
    </section>
  )
}

const fxTones = { gray: 'bg-[#6b696c]', violet: 'bg-[#a98fd6]', green: 'bg-[#3a9440]', yellow: 'bg-[#f0c244]' }

const FxBadge = ({ tone, className = '' }) => (
  <span className={`h-[11px] w-[11px] shrink-0 text-center font-['Liberation_Serif'] text-[11px] italic leading-[9px] text-black ${fxTones[tone]} ${className}`}>fx</span>
)

const clipTones = { selected: 'bg-[#cac7ca]', green: 'bg-[#5cb860]', pink: 'bg-[#e386e1]' }

function VideoClip({ clip }) {
  return (
    <div className={`absolute inset-y-0 flex items-start overflow-hidden ${clipTones[clip.tone || 'pink']}`} style={{ left: clip.x, width: clip.w, paddingLeft: clip.pad }}>
      {clip.fx && <FxBadge tone={clip.fx} className="mt-[3px]" />}
      {clip.label && <span className="ml-2 whitespace-nowrap leading-[14px] text-[#1f1020]">{clip.label}</span>}
      {clip.cross && (
        <svg width={clip.w} height="25" viewBox="0 0 9 25" preserveAspectRatio="none"><path d="M4.500 0v25" stroke="#2a2233" /><path d="M0 10l4.500 4L9 10v9l-4.500-4L0 19z" fill="#dfe4f7" /></svg>
      )}
      {clip.handles && (
        <>
          <span className="absolute bottom-1 left-0 h-3 w-1.5 border border-[#5a4552] bg-[#b9956f]" />
          <span className="absolute bottom-1 right-0 h-3 w-1 border border-[#5a4552] bg-[#b9956f]" />
        </>
      )}
      {clip.tone === 'green' && <svg width="6" height="6" className="absolute left-0 top-0"><path d="M0 0h5L0 5z" fill="#d9d7da" /><path d="M0 5.500 5.500 0" stroke="#1f1d20" /></svg>}
    </div>
  )
}

function AudioClip({ clip }) {
  const wave = wavePaths(clip)
  return (
    <div className="absolute inset-y-0 overflow-hidden bg-[#20694d]" style={{ left: clip.x, width: clip.w }}>
      <svg width={clip.w} height="49" shapeRendering="crispEdges">
        <path d={wave.spikes} fill="#2a9a70" />
        <path d={wave.body} fill="#3cd69c" />
        <path d={`M0 24.500h${clip.w}`} stroke="#f2fff8" />
        {clip.x > 0 && <path d="M.5 0v49" stroke="#5a8f79" />}
      </svg>
      {clip.fx && <FxBadge tone="gray" className="absolute left-[9px] top-0.5 border border-[#a4a2a5]" />}
      {clip.label && <span className="absolute bottom-[3px] left-0.5 whitespace-nowrap bg-[#17503a]/80 px-1 text-[10px] leading-3 text-[#8fb8a5]">{clip.label}</span>}
    </div>
  )
}

function Timeline() {
  const ticks = Array.from({ length: 96 }, (_, i) => ({ x: Math.round(i * 14.81), major: i % 15 === 0 }))
  return (
    <section className="relative min-w-0 flex-1 overflow-hidden bg-[#252326]">
      <nav className="flex h-[30px] items-center gap-[54px] whitespace-nowrap">
        <button className="flex w-[99px] shrink-0 justify-end pr-[3px]">Cumberbatch_Rough_Sketch</button>
        {sequences.map((s) => <button key={s}>{s}</button>)}
      </nav>
      <div className="flex pr-3">
        <div className="relative min-w-0 flex-1 overflow-hidden">
          <div className="-ml-[110px] mt-[11px] flex h-5 items-center">
            {timecodes.map((t) => <span key={t} className="w-[222px] shrink-0 text-center text-[#8f8d90]">{t}</span>)}
          </div>
          <svg width="100%" height="12" className="block" stroke="#555356">
            {ticks.map((t) => <path key={t.x} d={`M${t.x + 0.5} ${t.major ? 0 : 6}V12`} />)}
          </svg>
          <div className="flex h-0.5">
            <span className="w-[991px] bg-[#efe24b]" />
            <span className="w-[221px] bg-[#d33a3a]" />
          </div>
          <div className="bg-[#201e21]">
            {videoTracks.map((track, i) => (
              <div key={i} className="relative border-b border-[#343235]" style={{ height: track.h }}>
                {track.clips.map((c) => <VideoClip key={c.x} clip={c} />)}
              </div>
            ))}
            <div className="relative mt-px h-[50px] border-b border-[#343235]">
              {audioClips.map((c) => <AudioClip key={c.x} clip={c} />)}
            </div>
            <div className="relative h-3">
              <div className="absolute left-[826px] top-0 h-full w-[11px] border-t-2 border-r-2 border-[#20694d] bg-[#3cd69c]" />
            </div>
          </div>
          <div className="relative h-[11px] rounded-r-full border-y border-r border-[#343235] bg-[#1f1d20]">
            <div className="absolute -top-px left-[411px] flex w-[358px] justify-between bg-[#343235]"><Knob /><Knob /></div>
          </div>
          <div className="absolute bottom-[11px] left-[464px] top-[31px] w-px bg-[#2d8ceb]" />
          <svg width="11" height="12" viewBox="0 0 11 12" fill="#2d8ceb" className="absolute left-[459px] top-[31px]"><path d="M0 0h11v7l-4 4H4L0 7z" /></svg>
        </div>
        <div className="mt-[47px] w-[11px]">
          <div className="flex h-[117px] flex-col justify-between rounded-full bg-[#343235]"><Knob /><Knob /></div>
          <div className="mt-[10px] flex h-[59px] flex-col justify-between rounded-full bg-[#343235]"><Knob /><Knob /></div>
        </div>
      </div>
      <svg width="85" height="38" viewBox="0 0 85 38" fill="none" stroke="#dd1fd0" strokeWidth="4" strokeLinecap="round" strokeLinejoin="round" className="absolute right-12 top-[167px]"><path d="M2 19h80M67 2l16 17L71 36" /></svg>
    </section>
  )
}

const tools = [
  ['Selection', <path d="M-5-8 7 3 0 3.500-5 9z" fill="#2d8ceb" />, 'active'],
  ['Track select forward', <><path d="M-9-5.500H0M-9 5.500H0M-8.500-5v11M.5-5.500v3M.5 2.500v3" stroke="#b5b3b6" strokeDasharray="2 1.500" fill="none" /><path d="M-3-1.500h6V-4.500L9 0 3 4.500v-3h-6z" /></>],
  ['Ripple edit', <><path d="M-1-7H1V7h-2z" /><path d="M-10 0-4-4.500v3.500h3V1h-3v3.500zM10 0 4-4.500V-1H1V1h3v3.500z" /></>],
  ['Razor', <><path d="M-2.500-7.500 8 2.500 2.500 8-8-2.500z" /><path d="m-4-3 7.500 7M-2-3l1-1M1 .5 2-.5" stroke="#252326" strokeWidth="1.300" /></>],
  ['Slip', <><path d="M-10-7h2V7h-2zM8-7h2V7H8z" /><path d="M-7 0-3-3.500V-1h6v-2.500L7 0 3 3.500V1h-6v2.500z" /></>],
  ['Pen', 'pen', 'boxed'],
  ['Hand', 'hand'],
  ['Type', <path d="M-7-7H7v4.500H5.500L5-5H1V5.300h2.500V7h-7V5.300H-1V-5h-4l-.5 2.500H-7z" />, 'boxed'],
]

function Tools() {
  return (
    <section className="w-[49px] shrink-0 bg-[#252326] pt-[17px]">
      <div className="grid h-[221px] auto-rows-fr">
        {tools.map(([name, art, state]) => (
          <button key={name} aria-label={`${name} tool`} className="relative grid place-items-center">
            <span className={state === 'active' ? 'grid size-[26px] place-items-center border border-[#343235] bg-[#19171a]' : 'grid size-[26px] place-items-center'}>
              {art === 'pen' && <Pen />}
              {art === 'hand' && <FaHandPaper size={16} color="#b5b3b6" />}
              {typeof art !== 'string' && <svg width="22" height="20" viewBox="-11 -10 22 20" fill="#b5b3b6">{art}</svg>}
            </span>
            {name !== 'Selection' && name !== 'Razor' && <svg width="3" height="3" className="absolute bottom-0.5 right-[13px]" fill="#949295"><path d="M3 0v3H0z" /></svg>}
            {state === 'boxed' && <span className="absolute -inset-y-0.5 left-[3px] right-0.5 border-4 border-[#dd1fd0]" />}
          </button>
        ))}
      </div>
    </section>
  )
}

function Meters() {
  return (
    <section className="flex min-w-0 flex-1 bg-[#252326] pl-4 pt-[30px]">
      <svg width="18" height="224" viewBox="0 0 18 224" fill="none" stroke="#000">
        <path d="M.5.500h12v222H.5zM.5 9.500h12M6.500 0v9" />
        <path d="M1 220.500h5M7 220.500h5" stroke="#d9d34a" />
        {Array.from({ length: 49 }, (_, i) => <path key={i} d={`M14 ${12.5 + Math.round(i * 4.36)}h${i % 6 === 0 ? 4 : 2}`} stroke="#6b696c" />)}
      </svg>
      <div className="ml-[3px] mt-px text-[10px]">
        {['0', '–6', '–12', '–18', '–24', '–30', '–36', '–42', 'dB'].map((l) => <div key={l} className="h-[26px] leading-[22px]">{l}</div>)}
      </div>
    </section>
  )
}

export default function App() {
  return (
    <div className="flex min-h-screen flex-col overflow-hidden bg-[#18161a] font-['Noto_Sans',sans-serif] text-[12px] text-[#a09ea1]">
      <main className="flex gap-1 pt-px">
        <ProjectPanel />
        <ProgramPanel />
        <div className="relative flex w-[619px] shrink-0 gap-1.5 pl-1.5 pr-0.5">
          <EssentialGraphics />
          <EffectControls />
          <div className="pointer-events-none absolute -bottom-[10px] -left-1 right-0 top-0 z-10 border-b-4 border-l-4 border-[#dd1fd0]" />
        </div>
      </main>
      <div className="mt-1 flex h-[291px] gap-1">
        <Timeline />
        <Tools />
        <div className="flex w-[70px] shrink-0 pr-0.5"><Meters /></div>
      </div>
      <footer className="mt-px h-[21px] bg-[#252326]" />
      <div className="flex flex-1 bg-[#10151a] pl-[620px]"><span className="w-14 bg-[#8f8d90]" /></div>
    </div>
  )
}
